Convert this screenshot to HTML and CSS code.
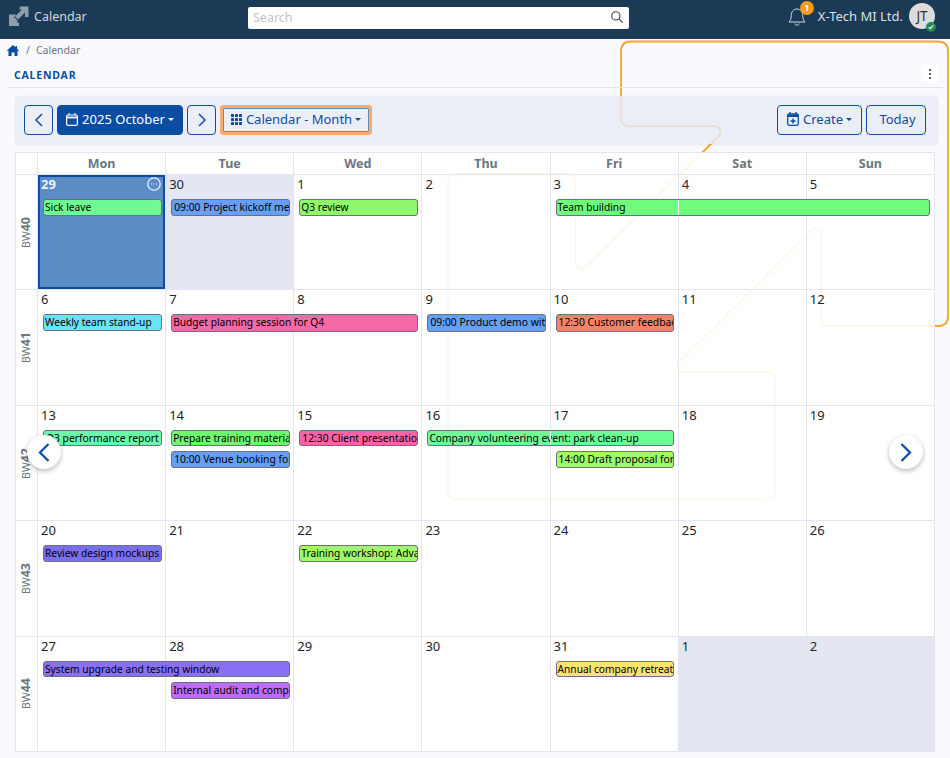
FILE: index.html
```html
<!DOCTYPE html>
<html lang="en">
<head>
    <meta charset="UTF-8">
    <title>Calendar</title>
    <link rel="stylesheet" href="styles.css">
</head>
<body>
    <header class="topbar">
        <div class="brand">
            <svg class="brand-logo" width="20" height="20" viewBox="0 0 20 20">
                <path d="M0 8.5h7.5l-2.5 2.5 4 4 -1.500 1.500 2.500 0v3.500h-10z" fill="#8e9eaa"/>
                <path d="M11 0.500h8.500v10.500h-3.500l0-4.500-7 7-3-3 7-7h-2.500z" fill="#8e9eaa"/>
            </svg>
            <span>Calendar</span>
        </div>
        <div class="search">
            <span class="search-text">Search</span>
            <svg width="12" height="12" viewBox="0 0 16 16" fill="none" stroke="#444" stroke-width="1.500">
                <circle cx="6.500" cy="6.500" r="5.500"/>
                <path d="M10.500 10.500l5 5"/>
            </svg>
        </div>
        <div class="user">
            <div class="bell">
                <svg width="18" height="21" viewBox="0 0 18 21" fill="none" stroke="#d5dade" stroke-width="1">
                    <path d="M1 16c1.500-1.500 2.200-3 2.200-6.500 0-3.500 2.500-6.500 5.800-6.500s5.800 3 5.800 6.500c0 3.500 0.700 5 2.200 6.500z"/>
                    <path d="M7 17.500c0 2.300 4 2.300 4 0"/>
                </svg>
                <span class="bell-badge">1</span>
            </div>
            <span class="company">X-Tech MI Ltd.</span>
            <div class="avatar">JT
                <span class="avatar-status">
                    <svg width="6" height="6" viewBox="0 0 8 8" fill="none" stroke="#fff" stroke-width="1.400"><path d="M1 4.200l2 2 4-4.400"/></svg>
                </span>
            </div>
        </div>
    </header>

    <svg class="tour-line" width="950" height="758" viewBox="0 0 950 758" fill="none">
        <path d="M631 41.500H938Q948 41.500 948 51.500V316Q948 326 938 326H828Q821 326 821 319V235C821 228 815 226 811 231L679 362C675 367 678 372 684 372H766Q775 372 775 381V490Q775 499.500 766 499.500H457Q448 499.500 448 490V183Q448 174 457 174H566Q575.500 174 575.500 183V260C575.500 269 581 272 587 266L718 137C723 132 720 126 713 126H629Q621 126 621 118V51.500Q621 41.500 631 41.500Z"/>
    </svg>

    <main class="page">
        <nav class="breadcrumb">
            <svg width="12" height="11" viewBox="0 0 12 11"><path d="M6 0L0 5.500l0.700 0.800 0.800-0.700V11h3V7.500h3V11h3V5.600l0.800 0.700 0.700-0.800L10 3.700V1H8.500v1.300z" fill="#0a4da3"/></svg>
            <span class="crumb-sep">/</span>
            <span>Calendar</span>
        </nav>

        <div class="title-row">
            <h1>Calendar</h1>
            <button class="more-btn"><i></i><i></i><i></i></button>
        </div>

        <div class="toolbar">
            <div class="tool-group">
                <button class="btn btn-icon">
                    <svg width="8" height="14" viewBox="0 0 8 14" fill="none" stroke="#0a4da3" stroke-width="1.500"><path d="M7 1L1 7l6 6"/></svg>
                </button>
                <button class="btn btn-primary">
                    <svg width="12" height="13" viewBox="0 0 12 13" fill="none" stroke="#fff" stroke-width="1.200"><rect x="0.600" y="2" width="10.800" height="10.400" rx="1.500"/><path d="M0.600 4.500h10.800" stroke-width="1.800"/><path d="M3 0v2M9 0v2"/></svg>
                    2025 October<span class="caret"></span>
                </button>
                <button class="btn btn-icon">
                    <svg width="8" height="14" viewBox="0 0 8 14" fill="none" stroke="#0a4da3" stroke-width="1.500"><path d="M1 1l6 6-6 6"/></svg>
                </button>
                <button class="btn btn-view">
                    <svg width="11" height="11" viewBox="0 0 11 11" fill="#0a4da3">
                        <rect width="3" height="3" rx="0.500"/><rect x="4" width="3" height="3" rx="0.500"/><rect x="8" width="3" height="3" rx="0.500"/>
                        <rect y="4" width="3" height="3" rx="0.500"/><rect x="4" y="4" width="3" height="3" rx="0.500"/><rect x="8" y="4" width="3" height="3" rx="0.500"/>
                        <rect y="8" width="3" height="3" rx="0.500"/><rect x="4" y="8" width="3" height="3" rx="0.500"/><rect x="8" y="8" width="3" height="3" rx="0.500"/>
                    </svg>
                    Calendar - Month<span class="caret"></span>
                </button>
            </div>
            <div class="tool-group">
                <button class="btn">
                    <svg width="12" height="14" viewBox="0 0 12 14"><path d="M3 0v2M9 0v2" stroke="#0a4da3" stroke-width="1.300"/><rect x="0.700" y="2" width="10.600" height="11.300" rx="1.500" fill="none" stroke="#0a4da3" stroke-width="1.300"/><path d="M0.700 2.500h10.600v2.500H0.700z" fill="#0a4da3"/><path d="M6 6.500v5M3.500 9h5" stroke="#0a4da3" stroke-width="1.400"/></svg>
                    Create<span class="caret caret-blue"></span>
                </button>
                <button class="btn btn-today">Today</button>
            </div>
        </div>

        <div class="calendar">
            <div class="corner"></div>
            <div class="dow">Mon</div>
            <div class="dow">Tue</div>
            <div class="dow">Wed</div>
            <div class="dow">Thu</div>
            <div class="dow">Fri</div>
            <div class="dow">Sat</div>
            <div class="dow">Sun</div>

            <div class="week"><span>BW<b>40</b></span></div>
            <div class="day day-selected">
                <div class="date">29
                    <svg class="day-menu" width="14" height="14" viewBox="0 0 14 14" fill="none" stroke="#eef2f8"><circle cx="7" cy="7" r="6.200" stroke-width="1.300"/><path d="M4 7h1M6.500 7h1M9 7h1" stroke-width="1.200"/></svg>
                </div>
                <div class="ev" style="background:#6ffb93">Sick leave</div>
            </div>
            <div class="day day-off">
                <div class="date">30</div>
                <div class="ev ev-wide" style="background:#669ff5">09:00 Project kickoff meeting</div>
            </div>
            <div class="day">
                <div class="date">1</div>
                <div class="ev" style="background:#90f96b">Q3 review</div>
            </div>
            <div class="day"><div class="date">2</div></div>
            <div class="day">
                <div class="date">3</div>
                <div class="ev span-3 seam" style="background:#6ffb7b">Team building</div>
            </div>
            <div class="day"><div class="date">4</div></div>
            <div class="day"><div class="date">5</div></div>

            <div class="week"><span>BW<b>41</b></span></div>
            <div class="day">
                <div class="date">6</div>
                <div class="ev" style="background:#6be3f7">Weekly team stand-up</div>
            </div>
            <div class="day">
                <div class="date">7</div>
                <div class="ev ev-tall span-2" style="background:#f768a6">Budget planning session for Q4</div>
            </div>
            <div class="day"><div class="date">8</div></div>
            <div class="day">
                <div class="date">9</div>
                <div class="ev ev-tall ev-wide" style="background:#669ff5">09:00 Product demo with client</div>
            </div>
            <div class="day">
                <div class="date">10</div>
                <div class="ev ev-tall ev-wide" style="background:#fb8269">12:30 Customer feedback call</div>
            </div>
            <div class="day"><div class="date">11</div></div>
            <div class="day"><div class="date">12</div></div>

            <div class="week"><span>BW<b>42</b></span></div>
            <div class="day">
                <div class="date">13</div>
                <div class="ev ev-wide" style="background:#6bf9ab">Q3 performance report</div>
            </div>
            <div class="day">
                <div class="date">14</div>
                <div class="ev" style="background:#6ffb6f">Prepare training materials</div>
                <div class="ev ev-tall ev-wide" style="background:#669ff5">10:00 Venue booking for event</div>
            </div>
            <div class="day">
                <div class="date">15</div>
                <div class="ev ev-wide" style="background:#f765a8">12:30 Client presentation</div>
            </div>
            <div class="day">
                <div class="date">16</div>
                <div class="ev span-2 seam" style="background:#6ffb96">Company volunteering event: park clean-up</div>
            </div>
            <div class="day">
                <div class="date">17</div>
                <div class="ev ev-tall ev-wide ev-second" style="background:#9ffb66">14:00 Draft proposal for client</div>
            </div>
            <div class="day"><div class="date">18</div></div>
            <div class="day"><div class="date">19</div></div>

            <div class="week"><span>BW<b>43</b></span></div>
            <div class="day">
                <div class="date">20</div>
                <div class="ev" style="background:#7a6ff0">Review design mockups</div>
            </div>
            <div class="day"><div class="date">21</div></div>
            <div class="day">
                <div class="date">22</div>
                <div class="ev" style="background:#9ff96b">Training workshop: Advanced</div>
            </div>
            <div class="day"><div class="date">23</div></div>
            <div class="day"><div class="date">24</div></div>
            <div class="day"><div class="date">25</div></div>
            <div class="day"><div class="date">26</div></div>

            <div class="week"><span>BW<b>44</b></span></div>
            <div class="day">
                <div class="date">27</div>
                <div class="ev span-2" style="background:#8a6ff7">System upgrade and testing window</div>
            </div>
            <div class="day">
                <div class="date">28</div>
                <div class="ev ev-tall ev-second" style="background:#c06bf5">Internal audit and compliance</div>
            </div>
            <div class="day"><div class="date">29</div></div>
            <div class="day"><div class="date">30</div></div>
            <div class="day">
                <div class="date">31</div>
                <div class="ev" style="background:#fce46f">Annual company retreat</div>
            </div>
            <div class="day day-off"><div class="date">1</div></div>
            <div class="day day-off"><div class="date">2</div></div>

            <button class="float-btn float-prev">
                <svg width="12" height="19" viewBox="0 0 12 19" fill="none" stroke="#0a4da3" stroke-width="2.200"><path d="M10.500 1L2 9.500l8.500 8.500"/></svg>
            </button>
            <button class="float-btn float-next">
                <svg width="12" height="19" viewBox="0 0 12 19" fill="none" stroke="#0a4da3" stroke-width="2.200"><path d="M1.500 1L10 9.500 1.500 18"/></svg>
            </button>
        </div>
    </main>
</body>
</html>
```

FILE: styles.css
```css
* {
    box-sizing: border-box;
}

body {
    margin: 0;
    font-family: 'Noto Sans', sans-serif;
    background-color: #f9f9fe;
    color: #212529;
    overflow: hidden;
}

button {
    font-family: inherit;
}

/* top bar */
.topbar {
    position: relative;
    z-index: 2;
    display: flex;
    align-items: center;
    height: 39px;
    padding: 0 15px 7px 9px;
    background-color: #1a3a56;
}

.brand {
    display: flex;
    align-items: center;
    gap: 5px;
    width: 239px;
    font-size: 12.500px;
    color: #d3d8dd;
}

.search {
    display: flex;
    align-items: center;
    justify-content: space-between;
    width: 381px;
    height: 22px;
    padding: 0 6px 2px 5px;
    margin-top: 4px;
    background-color: #fff;
    border-radius: 2px;
}

.search-text {
    font-size: 12.500px;
    color: #c4c4c4;
}

.user {
    display: flex;
    align-items: center;
    margin-left: auto;
    color: #dde1e5;
    font-size: 13px;
}

.bell {
    position: relative;
    height: 21px;
    margin-right: 12px;
}

.bell-badge {
    position: absolute;
    top: -5px;
    left: 12px;
    width: 14px;
    height: 14px;
    border-radius: 50%;
    background-color: #f59c1a;
    color: #fff;
    font-size: 9px;
    font-weight: 700;
    line-height: 14px;
    text-align: center;
}

.company {
    margin-right: 6px;
}

.avatar {
    position: relative;
    width: 26px;
    height: 26px;
    border-radius: 50%;
    background-color: #dcdcdc;
    color: #333;
    font-size: 13.500px;
    line-height: 26px;
    text-align: center;
}

.avatar-status {
    position: absolute;
    right: -1px;
    bottom: -3px;
    display: flex;
    align-items: center;
    justify-content: center;
    width: 10px;
    height: 10px;
    border-radius: 50%;
    background-color: #1e8a55;
}

/* orange line that runs behind the page */
.tour-line {
    position: absolute;
    top: 0;
    left: 0;
    z-index: 0;
    stroke: #f5a623;
    stroke-width: 1.800;
}

.page {
    position: relative;
    z-index: 1;
    padding: 0 7px 0 7px;
}

.breadcrumb {
    display: flex;
    align-items: center;
    gap: 6px;
    height: 22px;
    font-size: 10.500px;
    color: #6c757d;
}

.crumb-sep {
    margin-left: 1px;
}

.title-row {
    display: flex;
    align-items: center;
    justify-content: space-between;
    height: 27px;
    padding: 1px 5px 0 7px;
    border-bottom: 1px solid #e3e4ea;
}

h1 {
    margin: 0;
    font-size: 10.500px;
    font-weight: 700;
    letter-spacing: 0.800px;
    text-transform: uppercase;
    color: #0a4da3;
}

.more-btn {
    display: flex;
    flex-direction: column;
    align-items: center;
    justify-content: center;
    gap: 2px;
    width: 16px;
    height: 16px;
    padding: 0;
    margin-top: -2px;
    border: none;
    background-color: #fff;
}

.more-btn i {
    width: 2px;
    height: 2px;
    background-color: #222;
    border-radius: 50%;
}

/* toolbar */
.toolbar {
    display: flex;
    align-items: center;
    justify-content: space-between;
    width: 922px;
    height: 48px;
    margin: 8px 0 8px 8px;
    padding: 0 11px 0 9px;
    background-color: rgba(233, 235, 245, 0.82);
    border-radius: 3px;
    box-shadow: 1px 1px 3px rgba(0, 0, 0, 0.08);
}

.tool-group {
    display: flex;
    gap: 4px;
}

.btn {
    display: flex;
    align-items: center;
    justify-content: center;
    gap: 4px;
    height: 30px;
    padding: 0 9px 2px;
    font-size: 13px;
    color: #0a4da3;
    background: none;
    border: 1px solid #0a4da3;
    border-radius: 4px;
}

.btn-icon {
    width: 29px;
    padding: 0;
}

.btn-primary {
    width: 126px;
    padding: 0 0 2px;
    background-color: #0a4da3;
    color: #fff;
}

.btn-view {
    width: 146px;
    margin: 0 3px;
    padding: 0 0 2px;
    gap: 4px;
    border-radius: 1px;
    border-color: #6f86ad;
    box-shadow: 0 0 0 3px #f5ac6e;
    height: 24px;
    align-self: center;
}

.btn-today {
    width: 60px;
    padding: 0 0 2px 3px;
}

.caret {
    width: 0;
    height: 0;
    margin-left: -1px;
    border-top: 3.500px solid #fff;
    border-left: 3.500px solid transparent;
    border-right: 3.500px solid transparent;
}

.btn-view .caret,
.caret-blue {
    border-top-color: #0a4da3;
}

/* month grid */
.calendar {
    position: relative;
    display: grid;
    grid-template-columns: 22px repeat(7, 1fr);
    grid-template-rows: 22px repeat(5, 115.400px);
    width: 920px;
    margin-left: 8px;
    border-right: 1px solid #e4e5f2;
    border-bottom: 1px solid #e4e5f2;
}

.corner,
.dow,
.week,
.day {
    border-top: 1px solid #e4e5f2;
    border-left: 1px solid #e4e5f2;
    background-color: rgba(255, 255, 255, 0.9);
}

.dow {
    font-size: 12.500px;
    font-weight: 700;
    line-height: 21px;
    text-align: center;
    color: #6c757d;
}

.week {
    display: flex;
    align-items: center;
    justify-content: center;
    padding-right: 2px;
}

.week span {
    writing-mode: vertical-rl;
    transform: rotate(180deg);
    font-size: 10.500px;
    color: #6c757d;
}

.week b {
    font-size: 12.500px;
}

.day {
    min-width: 0;
}

.day-off {
    background-color: #e4e6f2;
}

.day-selected {
    background-color: #5b8cc6;
    box-shadow: inset 0 0 0 2px #0a4da3;
    color: #eef2f8;
}

.date {
    position: relative;
    height: 24px;
    padding: 0 0 0 3px;
    font-size: 13px;
    line-height: 18px;
}

.day-selected .date {
    font-weight: 700;
}

.day-menu {
    position: absolute;
    top: 2px;
    right: 4px;
}

.ev {
    position: relative;
    z-index: 1;
    width: calc(100% - 8.600px);
    height: 16.500px;
    margin: 0 0 4.500px 5px;
    padding-left: 1px;
    overflow: hidden;
    white-space: nowrap;
    font-size: 10.200px;
    line-height: 14.500px;
    color: #000;
    border: 1px solid #6c6f80;
    border-radius: 3px;
}

.ev-tall {
    height: 17.700px;
    line-height: 15.500px;
}

.ev-wide {
    padding-left: 2px;
    font-size: 10.300px;
}

.ev-second {
    margin-top: 21px;
}

.span-2 {
    width: calc(200% + 1px - 8.600px);
}

.span-3 {
    width: calc(300% + 2px - 8.600px);
}

/* the cell line shows through long events */
.seam::after {
    content: "";
    position: absolute;
    top: -1px;
    bottom: -1px;
    left: 121.500px;
    width: 1px;
    background-color: #eaf0f4;
}

.float-btn {
    position: absolute;
    top: 283px;
    z-index: 3;
    display: flex;
    align-items: center;
    justify-content: center;
    width: 34px;
    height: 34px;
    padding: 0;
    border: none;
    border-radius: 50%;
    background-color: #fff;
    box-shadow: 0 2px 5px rgba(0, 0, 0, 0.28);
}

.float-prev {
    left: 12px;
}

.float-next {
    right: 11px;
}
```
